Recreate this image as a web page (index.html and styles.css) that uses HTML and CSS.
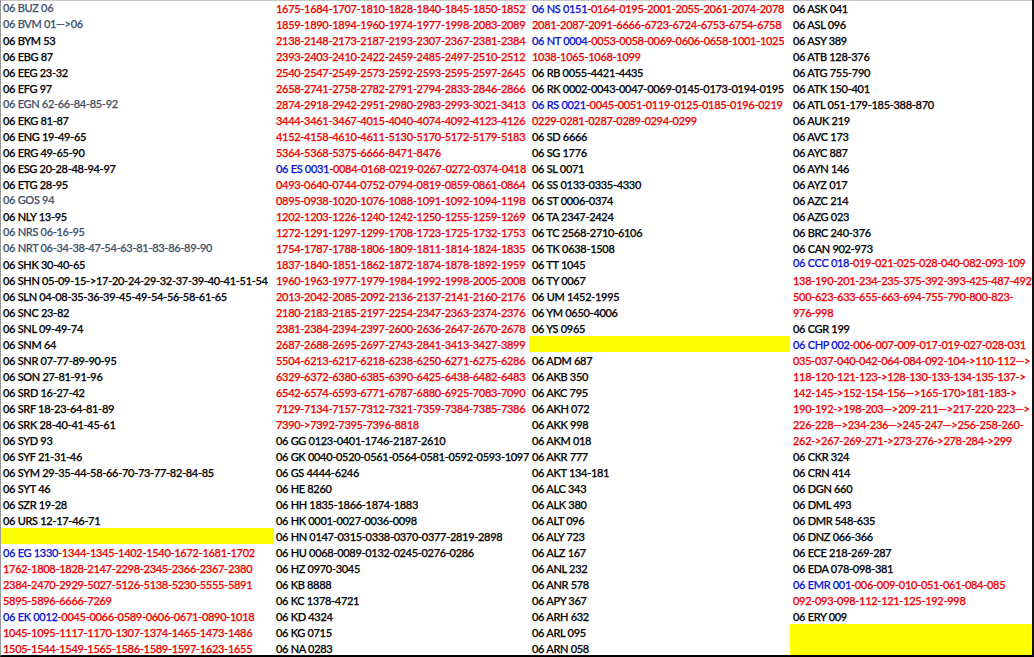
FILE: index.html
```html
<!DOCTYPE html>
<html lang="tr">
<head>
<meta charset="utf-8">
<title>Kod listesi</title>
<link rel="stylesheet" href="styles.css">
</head>
<body>
<main class="sheet">
<section class="col c1">
<div class="row g">06 BUZ 06</div>
<div class="row g">06 BVM 01—&gt;06</div>
<div class="row">06 BYM 53</div>
<div class="row">06 EBG 87</div>
<div class="row">06 EEG 23-32</div>
<div class="row">06 EFG 97</div>
<div class="row g">06 EGN 62-66-84-85-92</div>
<div class="row">06 EKG 81-87</div>
<div class="row">06 ENG 19-49-65</div>
<div class="row">06 ERG 49-65-90</div>
<div class="row">06 ESG 20-28-48-94-97</div>
<div class="row">06 ETG 28-95</div>
<div class="row g">06 GOS 94</div>
<div class="row">06 NLY 13-95</div>
<div class="row g">06 NRS 06-16-95</div>
<div class="row g">06 NRT 06-34-38-47-54-63-81-83-86-89-90</div>
<div class="row">06 SHK 30-40-65</div>
<div class="row">06 SHN 05-09-15-&gt;17-20-24-29-32-37-39-40-41-51-54</div>
<div class="row">06 SLN 04-08-35-36-39-45-49-54-56-58-61-65</div>
<div class="row">06 SNC 23-82</div>
<div class="row">06 SNL 09-49-74</div>
<div class="row">06 SNM 64</div>
<div class="row">06 SNR 07-77-89-90-95</div>
<div class="row">06 SON 27-81-91-96</div>
<div class="row">06 SRD 16-27-42</div>
<div class="row">06 SRF 18-23-64-81-89</div>
<div class="row">06 SRK 28-40-41-45-61</div>
<div class="row">06 SYD 93</div>
<div class="row">06 SYF 21-31-46</div>
<div class="row">06 SYM 29-35-44-58-66-70-73-77-82-84-85</div>
<div class="row">06 SYT 46</div>
<div class="row">06 SZR 19-28</div>
<div class="row">06 URS 12-17-46-71</div>
<div class="row y"></div>
<div class="row r"><span class="b">06 EG 1330</span>-1344-1345-1402-1540-1672-1681-1702</div>
<div class="row r">1762-1808-1828-2147-2298-2345-2366-2367-2380</div>
<div class="row r">2384-2470-2929-5027-5126-5138-5230-5555-5891</div>
<div class="row r">5895-5896-6666-7269</div>
<div class="row r"><span class="b">06 EK 0012</span>-0045-0066-0589-0606-0671-0890-1018</div>
<div class="row r">1045-1095-1117-1170-1307-1374-1465-1473-1486</div>
<div class="row r">1505-1544-1549-1565-1586-1589-1597-1623-1655</div>
</section>
<section class="col c2">
<div class="row r">1675-1684-1707-1810-1828-1840-1845-1850-1852</div>
<div class="row r">1859-1890-1894-1960-1974-1977-1998-2083-2089</div>
<div class="row r">2138-2148-2173-2187-2193-2307-2367-2381-2384</div>
<div class="row r">2393-2403-2410-2422-2459-2485-2497-2510-2512</div>
<div class="row r">2540-2547-2549-2573-2592-2593-2595-2597-2645</div>
<div class="row r">2658-2741-2758-2782-2791-2794-2833-2846-2866</div>
<div class="row r">2874-2918-2942-2951-2980-2983-2993-3021-3413</div>
<div class="row r">3444-3461-3467-4015-4040-4074-4092-4123-4126</div>
<div class="row r">4152-4158-4610-4611-5130-5170-5172-5179-5183</div>
<div class="row r">5364-5368-5375-6666-8471-8476</div>
<div class="row r"><span class="b">06 ES 0031</span>-0084-0168-0219-0267-0272-0374-0418</div>
<div class="row r">0493-0640-0744-0752-0794-0819-0859-0861-0864</div>
<div class="row r">0895-0938-1020-1076-1088-1091-1092-1094-1198</div>
<div class="row r">1202-1203-1226-1240-1242-1250-1255-1259-1269</div>
<div class="row r">1272-1291-1297-1299-1708-1723-1725-1732-1753</div>
<div class="row r">1754-1787-1788-1806-1809-1811-1814-1824-1835</div>
<div class="row r">1837-1840-1851-1862-1872-1874-1878-1892-1959</div>
<div class="row r">1960-1963-1977-1979-1984-1992-1998-2005-2008</div>
<div class="row r">2013-2042-2085-2092-2136-2137-2141-2160-2176</div>
<div class="row r">2180-2183-2185-2197-2254-2347-2363-2374-2376</div>
<div class="row r">2381-2384-2394-2397-2600-2636-2647-2670-2678</div>
<div class="row r">2687-2688-2695-2697-2743-2841-3413-3427-3899</div>
<div class="row r">5504-6213-6217-6218-6238-6250-6271-6275-6286</div>
<div class="row r">6329-6372-6380-6385-6390-6425-6438-6482-6483</div>
<div class="row r">6542-6574-6593-6771-6787-6880-6925-7083-7090</div>
<div class="row r">7129-7134-7157-7312-7321-7359-7384-7385-7386</div>
<div class="row r">7390-&gt;7392-7395-7396-8818</div>
<div class="row">06 GG 0123-0401-1746-2187-2610</div>
<div class="row">06 GK 0040-0520-0561-0564-0581-0592-0593-1097</div>
<div class="row">06 GS 4444-6246</div>
<div class="row">06 HE 8260</div>
<div class="row">06 HH 1835-1866-1874-1883</div>
<div class="row">06 HK 0001-0027-0036-0098</div>
<div class="row">06 HN 0147-0315-0338-0370-0377-2819-2898</div>
<div class="row">06 HU 0068-0089-0132-0245-0276-0286</div>
<div class="row">06 HZ 0970-3045</div>
<div class="row">06 KB 8888</div>
<div class="row">06 KC 1378-4721</div>
<div class="row">06 KD 4324</div>
<div class="row">06 KG 0715</div>
<div class="row">06 NA 0283</div>
</section>
<section class="col c3">
<div class="row r"><span class="b">06 NS 0151</span>-0164-0195-2001-2055-2061-2074-2078</div>
<div class="row r">2081-2087-2091-6666-6723-6724-6753-6754-6758</div>
<div class="row r"><span class="b">06 NT 0004</span>-0053-0058-0069-0606-0658-1001-1025</div>
<div class="row r">1038-1065-1068-1099</div>
<div class="row">06 RB 0055-4421-4435</div>
<div class="row">06 RK 0002-0043-0047-0069-0145-0173-0194-0195</div>
<div class="row r"><span class="b">06 RS 0021</span>-0045-0051-0119-0125-0185-0196-0219</div>
<div class="row r">0229-0281-0287-0289-0294-0299</div>
<div class="row">06 SD 6666</div>
<div class="row">06 SG 1776</div>
<div class="row">06 SL 0071</div>
<div class="row">06 SS 0133-0335-4330</div>
<div class="row">06 ST 0006-0374</div>
<div class="row">06 TA 2347-2424</div>
<div class="row">06 TC 2568-2710-6106</div>
<div class="row">06 TK 0638-1508</div>
<div class="row">06 TT 1045</div>
<div class="row">06 TY 0067</div>
<div class="row">06 UM 1452-1995</div>
<div class="row">06 YM 0650-4006</div>
<div class="row">06 YS 0965</div>
<div class="row y"></div>
<div class="row">06 ADM 687</div>
<div class="row">06 AKB 350</div>
<div class="row">06 AKC 795</div>
<div class="row">06 AKH 072</div>
<div class="row">06 AKK 998</div>
<div class="row">06 AKM 018</div>
<div class="row">06 AKR 777</div>
<div class="row">06 AKT 134-181</div>
<div class="row">06 ALC 343</div>
<div class="row">06 ALK 380</div>
<div class="row">06 ALT 096</div>
<div class="row">06 ALY 723</div>
<div class="row">06 ALZ 167</div>
<div class="row">06 ANL 232</div>
<div class="row">06 ANR 578</div>
<div class="row">06 APY 367</div>
<div class="row">06 ARH 632</div>
<div class="row">06 ARL 095</div>
<div class="row">06 ARN 058</div>
</section>
<section class="col c4">
<div class="row">06 ASK 041</div>
<div class="row">06 ASL 096</div>
<div class="row">06 ASY 389</div>
<div class="row">06 ATB 128-376</div>
<div class="row">06 ATG 755-790</div>
<div class="row">06 ATK 150-401</div>
<div class="row">06 ATL 051-179-185-388-870</div>
<div class="row">06 AUK 219</div>
<div class="row">06 AVC 173</div>
<div class="row">06 AYC 887</div>
<div class="row">06 AYN 146</div>
<div class="row">06 AYZ 017</div>
<div class="row">06 AZC 214</div>
<div class="row">06 AZG 023</div>
<div class="row">06 BRC 240-376</div>
<div class="row">06 CAN 902-973</div>
<div class="row r up"><span class="b">06 CCC 018</span>-019-021-025-028-040-082-093-109</div>
<div class="row r">138-190-201-234-235-375-392-393-425-487-492</div>
<div class="row r">500-623-633-655-663-694-755-790-800-823-</div>
<div class="row r">976-998</div>
<div class="row">06 CGR 199</div>
<div class="row r"><span class="b">06 CHP 002</span>-006-007-009-017-019-027-028-031</div>
<div class="row r">035-037-040-042-064-084-092-104-&gt;110-112—&gt;</div>
<div class="row r">118-120-121-123-&gt;128-130-133-134-135-137-&gt;</div>
<div class="row r">142-145-&gt;152-154-156—&gt;165-170&gt;181-183-&gt;</div>
<div class="row r">190-192-&gt;198-203—&gt;209-211—&gt;217-220-223—&gt;</div>
<div class="row r">226-228—&gt;234-236—&gt;245-247—&gt;256-258-260-</div>
<div class="row r">262-&gt;267-269-271-&gt;273-276-&gt;278-284-&gt;299</div>
<div class="row">06 CKR 324</div>
<div class="row">06 CRN 414</div>
<div class="row">06 DGN 660</div>
<div class="row">06 DML 493</div>
<div class="row">06 DMR 548-635</div>
<div class="row">06 DNZ 066-366</div>
<div class="row">06 ECE 218-269-287</div>
<div class="row">06 EDA 078-098-381</div>
<div class="row r"><span class="b">06 EMR 001</span>-006-009-010-051-061-084-085</div>
<div class="row r">092-093-098-112-121-125-192-998</div>
<div class="row">06 ERY 009</div>
<div class="row y tall"></div>
</section>
</main>
</body>
</html>
```

FILE: styles.css
```css
html, body {
  margin: 0;
  padding: 0;
  background: #fff;
}

.sheet {
  box-sizing: border-box;
  display: grid;
  grid-template-columns: 273px 255px 261px 242px;
  width: 1034px;
  height: 657px;
  overflow: hidden;
  background: #fff;
  border-left: 1px solid #9a9a9a;
  border-right: 2px solid #111;
  border-bottom: 2px solid #000;
  box-shadow: inset 0 1px 0 #c8c8c8;
  font-family: Lato, "Liberation Sans", sans-serif;
  font-size: 11px;
  font-weight: 500;
  letter-spacing: -0.3px;
  -webkit-text-stroke: 0.25px currentColor;
  color: #000;
}

.col {
  min-width: 0;
}

.c1 .row { padding-left: 2px; }
.c2 .row { padding-left: 2px; }
.c3 .row { padding-left: 3px; }
.c4 .row { padding-left: 3px; }

.row {
  height: 16px;
  line-height: 18px;
  white-space: nowrap;
}

.g {
  color: #44546a;
  line-height: 16px;
}

.r {
  color: #f00000;
}

.b {
  color: #0a14d2;
}

.y {
  background: #ffff00;
}

.tall {
  height: 31px;
}

.up {
  line-height: 14px;
}
```
